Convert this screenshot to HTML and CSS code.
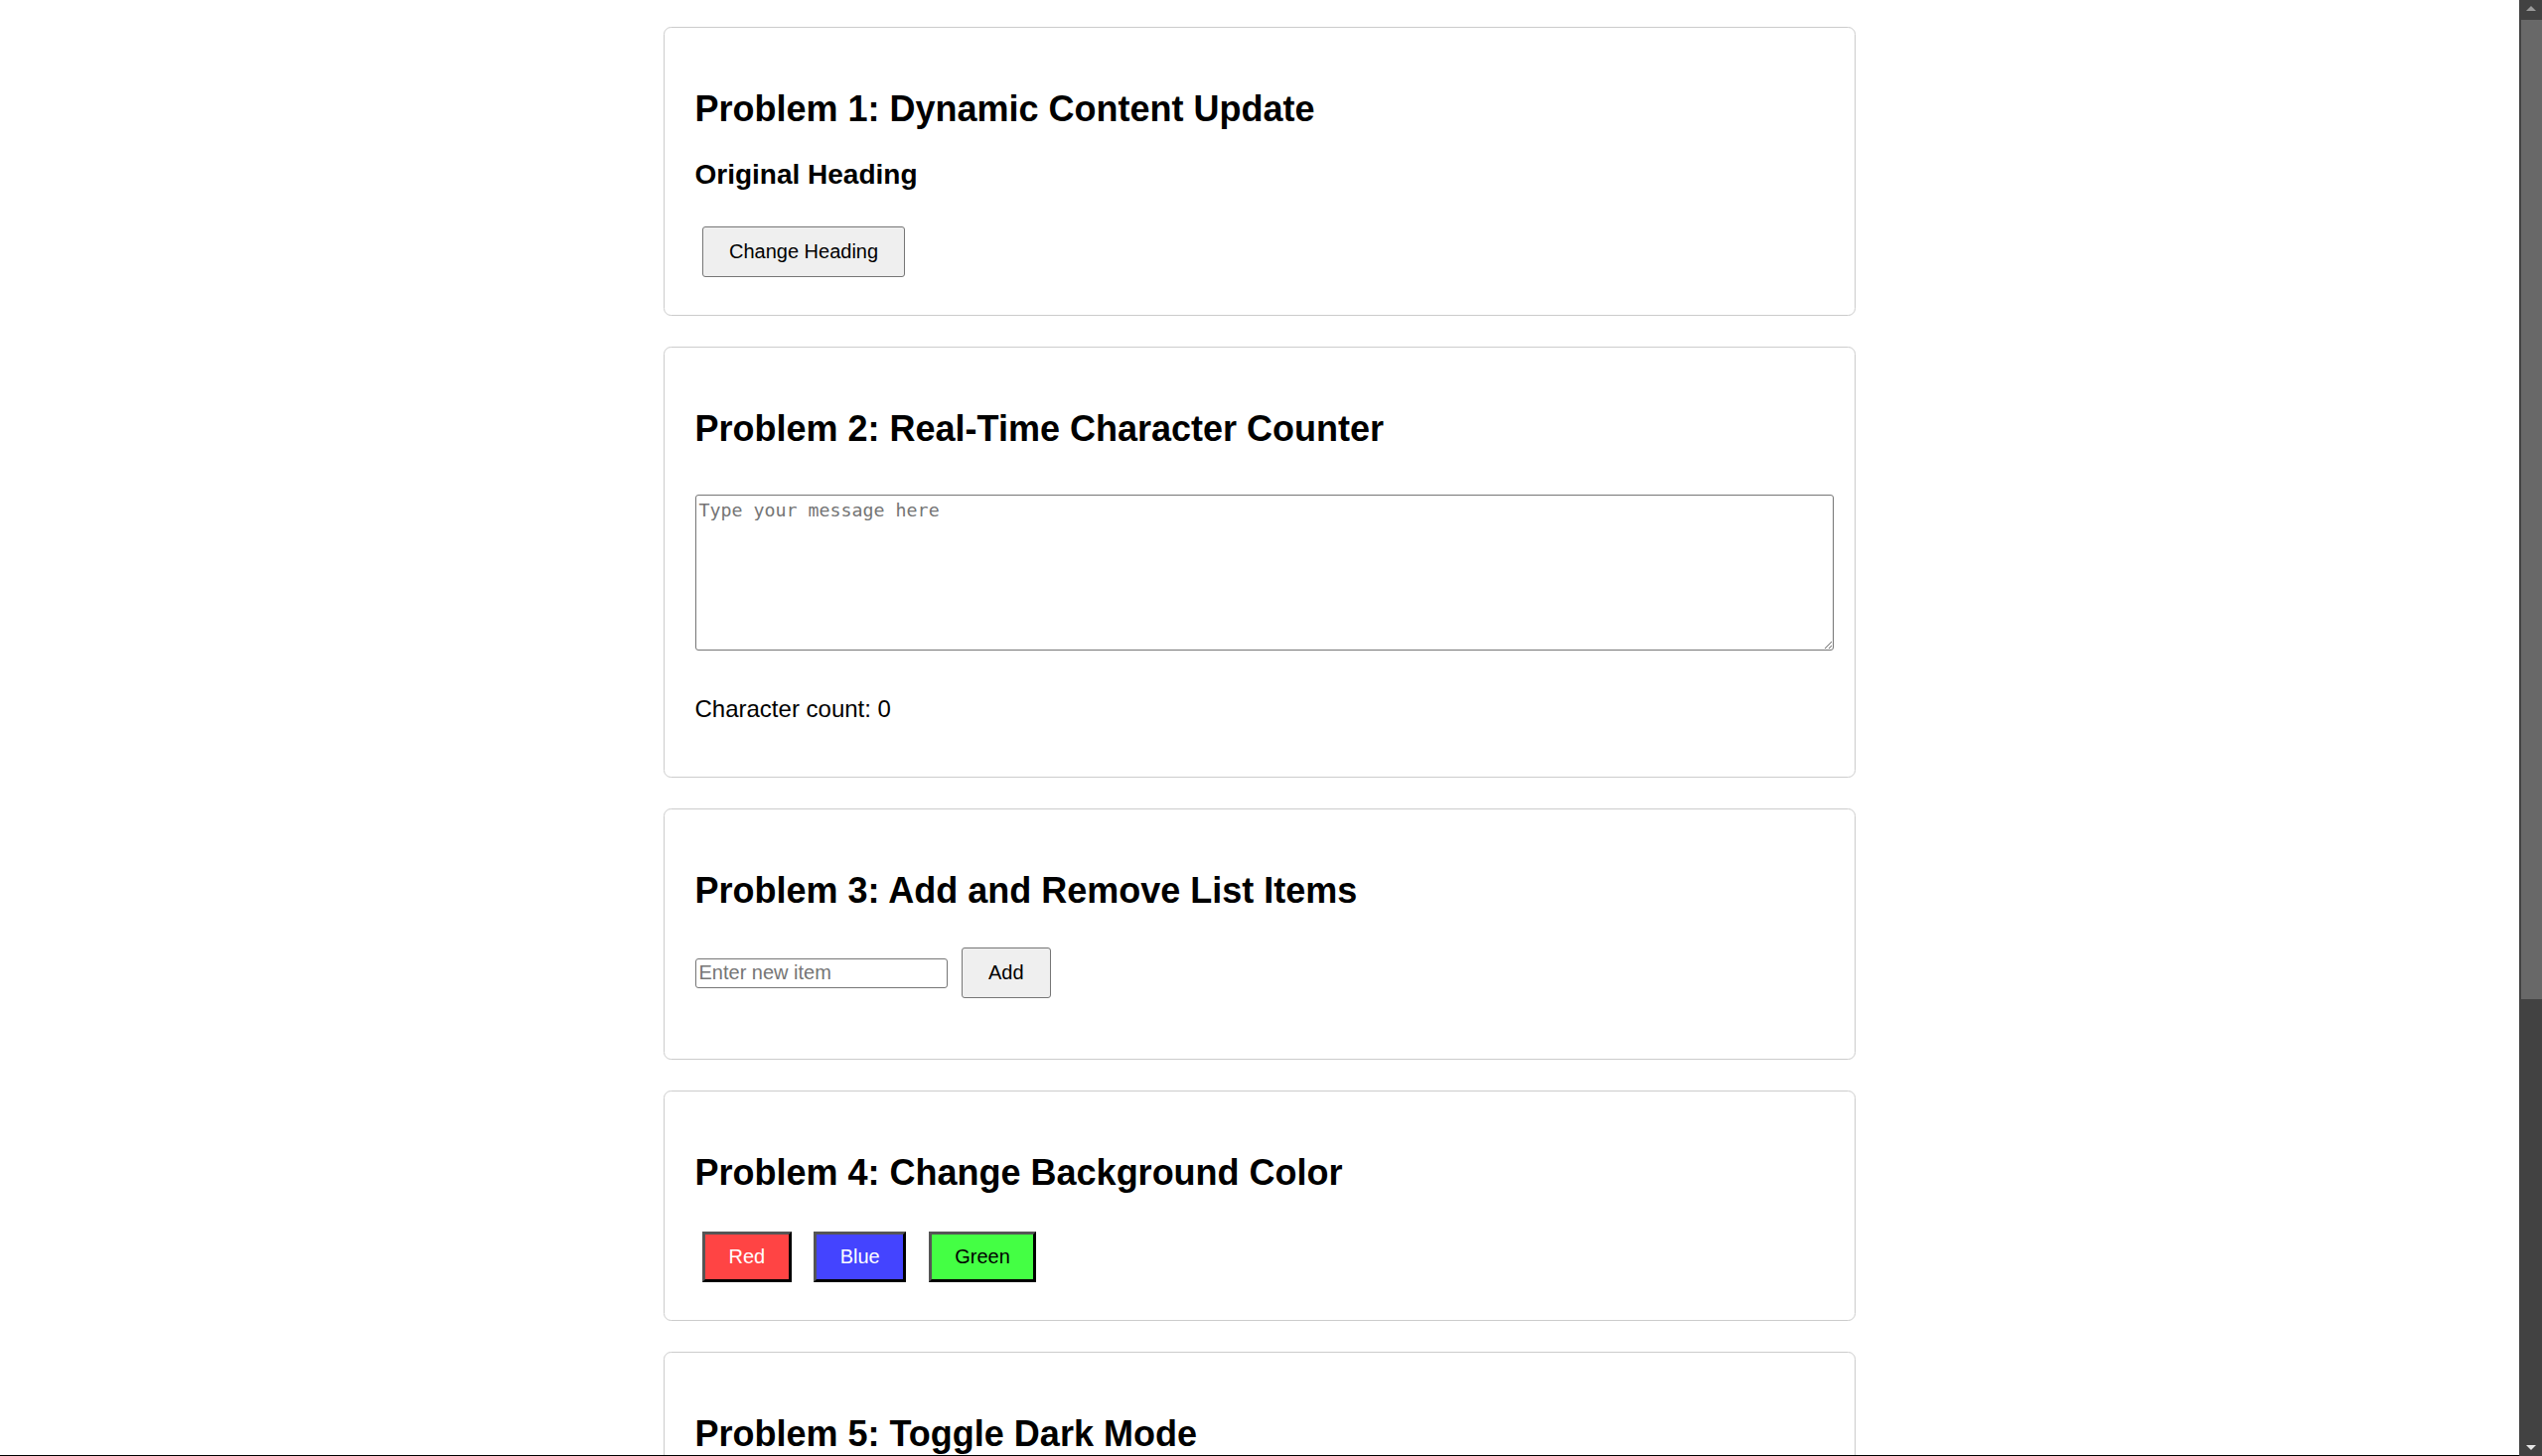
FILE: index.html
```html
<!DOCTYPE html>
<html lang="en">
<head>
<meta charset="utf-8">
<title>DOM Manipulation Problems</title>
<link rel="stylesheet" href="styles.css">
</head>
<body>
<main class="page">
  <section class="card">
    <h2 class="title">Problem 1: Dynamic Content Update</h2>
    <h3 class="subtitle">Original Heading</h3>
    <div class="actions"><button class="btn" type="button">Change Heading</button></div>
  </section>

  <section class="card">
    <h2 class="title">Problem 2: Real-Time Character Counter</h2>
    <textarea class="message" placeholder="Type your message here"></textarea>
    <p class="count">Character count: 0</p>
  </section>

  <section class="card">
    <h2 class="title">Problem 3: Add and Remove List Items</h2>
    <div class="item-row">
      <input class="item-input" type="text" placeholder="Enter new item">
      <button class="btn" type="button">Add</button>
    </div>
    <ul class="item-list"></ul>
  </section>

  <section class="card">
    <h2 class="title">Problem 4: Change Background Color</h2>
    <div class="color-row">
      <button class="color-btn red" type="button">Red</button>
      <button class="color-btn blue" type="button">Blue</button>
      <button class="color-btn green" type="button">Green</button>
    </div>
  </section>

  <section class="card card-last">
    <h2 class="title">Problem 5: Toggle Dark Mode</h2>
  </section>
</main>

<div class="frame-line"></div>

<div class="scrollbar" aria-hidden="true">
  <div class="sb-button"><span class="sb-arrow sb-up"></span></div>
  <div class="sb-track"><div class="sb-thumb"></div></div>
  <div class="sb-button"><span class="sb-arrow sb-down"></span></div>
</div>
</body>
</html>
```

FILE: styles.css
```css
html {
  overflow: hidden;
  background: #fff;
}

body {
  margin: 0;
  font-family: "Liberation Sans", Arial, sans-serif;
  font-size: 24px;
  color: #000;
  background: #fff;
}

.page {
  padding: 27px 23px 0 0;
}

.card {
  box-sizing: border-box;
  width: 1200px;
  margin: 0 auto 31.5px;
  padding: 30.5px;
  border: 1px solid #cccccc;
  border-radius: 7.5px;
  background: #fff;
}

.card-last {
  min-height: 300px;
}

.title {
  margin: 30px 0;
  font-size: 36px;
  line-height: 41px;
  font-weight: 700;
}

.subtitle {
  margin: 28px 0;
  font-size: 28px;
  line-height: 32px;
  font-weight: 700;
}

.actions {
  padding: 8px 0 7.5px 7.5px;
}

.btn {
  margin: 0;
  padding: 13px 26px;
  font-family: "Liberation Sans", Arial, sans-serif;
  font-size: 20px;
  line-height: 23px;
  color: #000;
  background: #efefef;
  border: 1px solid #767676;
  border-radius: 3px;
}

.message {
  display: block;
  box-sizing: border-box;
  width: 1146px;
  height: 157px;
  margin: 46px 0 0;
  padding: 3px;
  border: 1px solid #767676;
  border-radius: 3px;
  font-family: "DejaVu Sans Mono", "Liberation Mono", monospace;
  font-size: 18.3px;
  line-height: 23px;
  color: #000;
  background: #fff;
}

.message::placeholder {
  color: #757575;
}

.count {
  margin: 45px 0 24px;
  font-size: 24px;
  line-height: 27.6px;
}

.item-row {
  display: flex;
  align-items: center;
  gap: 14px;
  margin: 37.5px 0 30px;
}

.item-input {
  box-sizing: border-box;
  width: 254.5px;
  height: 30px;
  margin: 0;
  padding: 1.5px 3px;
  border: 1px solid #767676;
  border-radius: 3px;
  font-family: "Liberation Sans", Arial, sans-serif;
  font-size: 20px;
  color: #000;
  background: #fff;
}

.item-input::placeholder {
  color: #757575;
}

.item-list {
  margin: 0;
  padding: 0;
  list-style: none;
}

.color-row {
  display: flex;
  align-items: flex-start;
  gap: 22.5px;
  margin: 39px 0 7.5px 7.5px;
}

.color-btn {
  margin: 0;
  padding: 11px 23.5px;
  font-family: "Liberation Sans", Arial, sans-serif;
  font-size: 20px;
  line-height: 23px;
  color: #fff;
  border: 3px solid;
  border-color: #555555 #000000 #000000 #555555;
  border-radius: 0;
}

.red {
  background: #ff4444;
}

.blue {
  background: #4444ff;
}

.green {
  background: #44ff44;
  color: #000;
}

.frame-line {
  position: fixed;
  left: 0;
  right: 23px;
  bottom: 0;
  height: 1px;
  background: #000;
}

.scrollbar {
  position: fixed;
  top: 0;
  right: 0;
  bottom: 0;
  width: 23px;
  display: flex;
  flex-direction: column;
  background: #424242;
  z-index: 2;
}

.sb-button {
  height: 20px;
  display: flex;
  align-items: center;
  justify-content: center;
  flex: none;
}

.sb-arrow {
  width: 0;
  height: 0;
  border-left: 5.5px solid transparent;
  border-right: 5.5px solid transparent;
}

.sb-up {
  border-bottom: 5px solid #9a9a9a;
  margin-top: -3px;
}

.sb-down {
  border-top: 5px solid #e6e6e6;
  margin-top: 3px;
}

.sb-track {
  flex: 1;
  display: flex;
  flex-direction: column;
}

.sb-thumb {
  height: 986px;
  margin-left: 2px;
  background: #686868;
}
```
